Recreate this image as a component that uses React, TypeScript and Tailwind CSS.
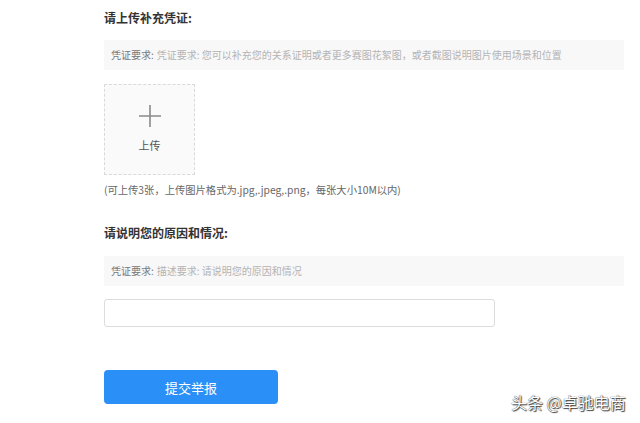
const font = "font-['Microsoft_YaHei','Noto_Sans_CJK_SC',sans-serif]";

function Requirement({ text }: { text: string }) {
    return (
        <div className="h-[30px] w-[520px] bg-[#f8f8f9] flex items-center px-[7px] text-[10px] leading-none">
            <span className="text-[#777]">凭证要求:</span>
            <span className="text-[#b4b4b4] ml-[3px]">{text}</span>
        </div>
    );
}

export default function App() {
    return (
        <div className={`relative w-[640px] h-[423px] bg-white overflow-hidden ${font}`}>
            <div className="pl-[104px] pt-[11px] flex flex-col">
                <h2 className="text-[12px] font-bold text-[#333] leading-[14px]">
                    请上传补充凭证:
                </h2>
                <div className="mt-[15px]">
                    <Requirement text="凭证要求: 您可以补充您的关系证明或者更多赛图花絮图，或者截图说明图片使用场景和位置" />
                </div>

                <div className="mt-[14px] w-[91px] h-[91px] border border-dashed border-[#d9d9d9] bg-[#fafafa] flex flex-col items-center">
                    <svg width="24" height="24" viewBox="0 0 24 24" className="mt-[19px]">
                        <path d="M12 1v22M1 12h22" stroke="#8a8a8a" strokeWidth="1.6" />
                    </svg>
                    <span className="mt-[12px] text-[11px] text-[#555] leading-none">上传</span>
                </div>

                <p className="mt-[9px] text-[10.3px] text-[#666] leading-[12px]">
                    (可上传3张，上传图片格式为.jpg,.jpeg,.png，每张大小10M以内)
                </p>

                <h2 className="mt-[30px] text-[12px] font-bold text-[#333] leading-[14px]">
                    请说明您的原因和情况:
                </h2>
                <div className="mt-[16px]">
                    <Requirement text="描述要求: 请说明您的原因和情况" />
                </div>

                <input
                    className="mt-[13px] w-[391px] h-[28px] border border-[#dcdcdc] rounded-[3px] bg-white outline-none"
                    readOnly
                />

                <button className="mt-[43px] w-[174px] h-[34px] rounded-[4px] bg-[#2b8ff8] text-white text-[13px] leading-none">
                    提交举报
                </button>
            </div>

            <div className="absolute left-[511px] top-[394px] text-[16px] leading-none text-white [text-shadow:0_0_1px_#000,1px_1px_1px_#444]">
                头条 @卓驰电商
            </div>
        </div>
    );
}
